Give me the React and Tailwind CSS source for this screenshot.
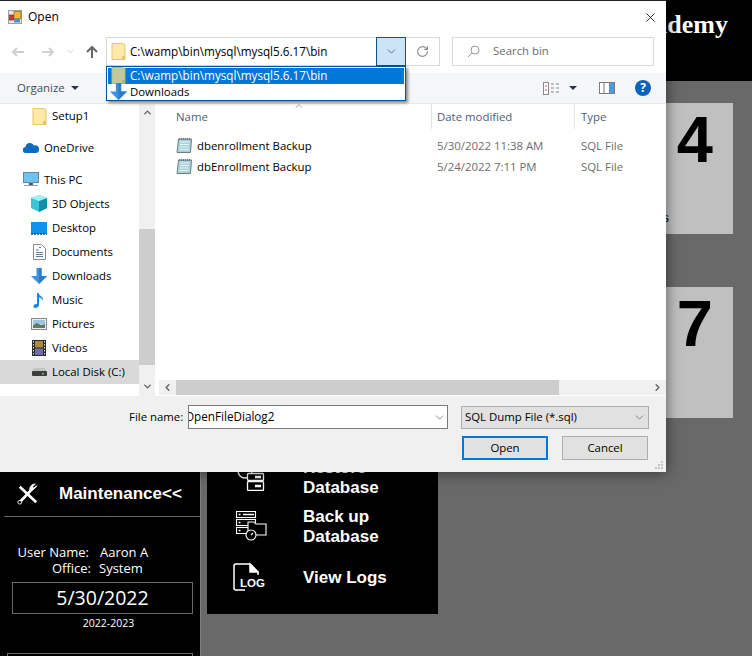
import { ChevronDown, ChevronUp, ChevronLeft, ChevronRight, RotateCw, X } from 'lucide-react';

const UI = "font-['Open_Sans','Noto_Sans',sans-serif]";

function Folder({ dim }) {
  return (
    <svg width="15" height="17" viewBox="0 0 15 17" className="shrink-0">
      <path d="M1 .5h10l3 1v15H1z" fill={dim ? '#c3c99b' : '#ffe9a6'} stroke={dim ? '#b6bd80' : '#e8c566'} />
      <path d="M11 16.5v-3l3-1v4z" fill={dim ? '#a9b36a' : '#e8c566'} />
    </svg>
  );
}

function DownArrow({ size = 16 }) {
  return (
    <svg width={size} height={size} viewBox="0 0 16 16" className="shrink-0">
      <path d="M5.5 0h5v8H16l-8 8-8-8h5.5z" fill="#3f92df" />
      <path d="M8 0h2.5v8H16l-8 8z" fill="#2b7ccb" />
    </svg>
  );
}

function SqlFile() {
  return (
    <svg width="16" height="15" viewBox="0 0 16 15" className="shrink-0">
      <path d="M2.5 1h13l-1 13.5H1z" fill="#a8d3de" stroke="#6f7f7f" />
      <path d="M4 4h9M4 6.5h9M3.5 9h9M3.5 11.5h9" stroke="#e7f2f4" />
      <path d="M3 1h12" stroke="#444" strokeDasharray="1 1" />
    </svg>
  );
}

function NavIcon({ name }) {
  if (name === 'cube')
    return (
      <svg width="16" height="17" viewBox="0 0 16 17">
        <path d="M8 0l8 3v10l-8 4-8-4V3z" fill="#39c6d4" />
        <path d="M8 6l8-3v10l-8 4z" fill="#0f8fa8" />
        <path d="M8 0l8 3-8 3-8-3z" fill="#9ff0f2" />
      </svg>
    );
  if (name === 'desktop')
    return (
      <svg width="16" height="14" viewBox="0 0 16 14">
        <rect width="16" height="12" y="1" fill="#0f92ee" />
        <path d="M0 13h16" stroke="#15507f" strokeWidth="1.5" strokeDasharray="2 1" />
      </svg>
    );
  if (name === 'docs')
    return (
      <svg width="13" height="16" viewBox="0 0 13 16">
        <path d="M.5.5h8l4 4v11H.5z" fill="#fff" stroke="#8a8a8a" />
        <path d="M3 6h3M3 8.500h7M3 10.500h7M3 12.500h7" stroke="#5b7f99" />
        <path d="M6 3.500h2" stroke="#3f8ac0" />
      </svg>
    );
  if (name === 'music')
    return (
      <svg width="12" height="16" viewBox="0 0 12 16">
        <path d="M4 1h1.500c.5 3 5.500 3.500 4.500 8-.5-2-2.500-3.500-4-3.500V13c0 2-2 3-4 3s-2-2-1-3 2.500-1.200 3-1z" fill="#1a86e0" />
      </svg>
    );
  if (name === 'pictures')
    return (
      <svg width="16" height="12" viewBox="0 0 16 12">
        <rect x=".5" y=".5" width="15" height="11" fill="#e8eef2" stroke="#8a8a8a" />
        <rect x="2" y="2" width="12" height="4" fill="#9cc6e6" />
        <path d="M2 7l4-2 4 2 4-1v4H2z" fill="#5d7a63" />
      </svg>
    );
  if (name === 'videos')
    return (
      <svg width="14" height="16" viewBox="0 0 14 16">
        <rect width="14" height="16" fill="#2b2b2b" />
        <rect x="3" y="1" width="8" height="6.500" fill="#b08a3a" />
        <rect x="3" y="8.500" width="8" height="6.500" fill="#6f6fb0" />
        <path d="M1.500 1v14M12.500 1v14" stroke="#ddd" strokeDasharray="1.500 1.500" />
      </svg>
    );
  if (name === 'disk')
    return (
      <svg width="15" height="8" viewBox="0 0 15 8">
        <path d="M2 0h11l2 3H0z" fill="#c4c4c4" />
        <rect y="3" width="15" height="5" rx="1" fill="#3e3e3e" />
        <rect x="10" y="5" width="2" height="1.500" fill="#4dd05a" />
      </svg>
    );
  if (name === 'cloud')
    return (
      <svg width="16" height="11" viewBox="0 0 16 11">
        <path d="M3 11a3 3 0 0 1-.5-6A4.500 4.500 0 0 1 11 3.500 3.800 3.800 0 0 1 16 8c0 2-1.500 3-3 3z" fill="#0f6cbd" />
      </svg>
    );
  if (name === 'pc')
    return (
      <svg width="16" height="15" viewBox="0 0 16 15">
        <rect x=".5" y=".5" width="15" height="10" fill="#6ec3f0" stroke="#6d8494" />
        <path d="M6 11h4v2H6zM1 13.500h14" stroke="#8ba0ad" />
      </svg>
    );
  return null;
}

const placesTop = [
  { label: 'OneDrive', icon: 'cloud' },
  { label: 'This PC', icon: 'pc' },
];

const places = [
  { label: '3D Objects', icon: 'cube' },
  { label: 'Desktop', icon: 'desktop' },
  { label: 'Documents', icon: 'docs' },
  { label: 'Downloads', icon: 'down' },
  { label: 'Music', icon: 'music' },
  { label: 'Pictures', icon: 'pictures' },
  { label: 'Videos', icon: 'videos' },
  { label: 'Local Disk (C:)', icon: 'disk', selected: true },
];

const files = [
  { name: 'dbenrollment Backup', date: '5/30/2022 11:38 AM' },
  { name: 'dbEnrollment Backup', date: '5/24/2022 7:11 PM' },
];

function OpenDialog() {
  return (
    <div className={`absolute left-0 top-0 flex h-[472px] w-[666px] flex-col border-t border-[#222] bg-white text-[11.4px] text-black shadow-[0_0_14px_rgba(0,0,0,0.55)] ${UI}`}>
      {/* title bar */}
      <div className="flex h-[36px] shrink-0 items-center pb-[4px] pl-[8px] pr-[8px]">
        <svg width="14" height="14" viewBox="0 0 14 14">
          <rect x=".5" y=".5" width="13" height="13" fill="#e6e6e6" stroke="#a0a0a0" />
          <rect x="6" y="1.500" width="7" height="7" fill="#f2b632" stroke="#8a6a1a" strokeWidth=".7" />
          <rect x="1.500" y="5" width="4" height="5" fill="#d8382c" stroke="#7a2a2a" strokeWidth=".7" />
          <rect x="6" y="9" width="6" height="3.500" fill="#4f8fe0" />
        </svg>
        <span className="ml-[6px] text-[12px]">Open</span>
        <X size={15} strokeWidth={1.3} className="ml-auto" />
      </div>

      {/* address row */}
      <div className="relative flex h-[29px] shrink-0 items-center">
        <svg width="14" height="12" viewBox="0 0 14 12" className="ml-[11px]">
          <path d="M13 6H2M6 2L2 6l4 4" fill="none" stroke="#d0d0d0" strokeWidth="2" />
        </svg>
        <svg width="14" height="12" viewBox="0 0 14 12" className="ml-[16px]">
          <path d="M1 6h11M8 2l4 4-4 4" fill="none" stroke="#d0d0d0" strokeWidth="2" />
        </svg>
        <ChevronDown size={9} strokeWidth={2.5} className="ml-[11px] text-[#ccc]" />
        <svg width="14" height="14" viewBox="0 0 14 14" className="ml-[10px]">
          <path d="M7 13V2M2 7l5-5 5 5" fill="none" stroke="#666" strokeWidth="2" />
        </svg>
        <div className="ml-[7px] flex h-[29px] w-[270px] items-center gap-[4px] border border-r-0 border-[#d9d9d9] pl-[4px] text-[11.7px]">
          <Folder />
          <span>C:\wamp\bin\mysql\mysql5.6.17\bin</span>
        </div>
        <div className="flex h-[29px] w-[30px] items-center justify-center border border-[#005499] bg-[#cce4f7]">
          <ChevronDown size={13} strokeWidth={1.2} className="text-[#333]" />
        </div>
        <div className="flex h-[29px] w-[34px] items-center justify-center border border-l-0 border-[#d9d9d9]">
          <RotateCw size={13} strokeWidth={2} className="text-[#8a8a8a]" />
        </div>
        <div className="ml-[12px] flex h-[29px] w-[202px] items-center border border-[#d9d9d9] pl-[14px] text-[#6d6d6d]">
          <svg width="13" height="13" viewBox="0 0 13 13">
            <circle cx="8" cy="5" r="4" fill="none" stroke="#999" />
            <path d="M5 8l-4 4" stroke="#999" />
          </svg>
          <span className="ml-[13px] pb-[1px]">Search bin</span>
        </div>

        {/* open address dropdown */}
        <div className="absolute left-[106px] top-[29px] z-10 h-[35px] w-[300px] border border-[#005499] bg-white shadow-[2px_2px_3px_rgba(0,0,0,0.45)]">
          <div className="m-[1px] flex h-[16px] items-center gap-[4px] bg-[#0078d7] pl-[3px] text-[11.7px] text-white">
            <span className="-mt-[1px] h-[17px]">
              <Folder dim />
            </span>
            <span>C:\wamp\bin\mysql\mysql5.6.17\bin</span>
          </div>
          <div className="mx-[1px] flex h-[15px] items-center pb-[1px] pl-[22px]">Downloads</div>
          <div className="absolute left-[3px] top-[16px]">
            <DownArrow size={17} />
          </div>
        </div>
      </div>

      {/* command bar */}
      <div className="mt-[7px] flex h-[31px] shrink-0 items-center border-b border-[#e8e8e8] bg-[#f5f6f7] pl-[17px] text-[#3b4a5e]">
        <span>Organize</span>
        <span className="ml-[6px] h-0 w-0 border-x-[4px] border-t-[4px] border-x-transparent border-t-[#26364f]" />
        <div className="ml-auto flex items-center">
          <svg width="16" height="13" viewBox="0 0 16 13">
            <rect x=".5" y=".5" width="5" height="12" fill="#fff" stroke="#8a8a8a" />
            <path d="M2 4h2M2 8h2" stroke="#c55" />
            <path d="M8 2h3M13 2h3M8 6h3M13 6h3M8 10h3M13 10h3" stroke="#7a8594" />
          </svg>
          <span className="ml-[10px] h-0 w-0 border-x-[4px] border-t-[4px] border-x-transparent border-t-[#26364f]" />
          <svg width="16" height="12" viewBox="0 0 16 12" className="ml-[22px]">
            <rect x=".5" y=".5" width="15" height="11" fill="#fff" stroke="#7a7a7a" />
            <rect x="10" y="1" width="5" height="10" fill="#4b9ce0" />
            <path d="M5 1v10" stroke="#7a7a7a" />
          </svg>
          <span className="ml-[20px] mr-[15px] flex h-[16px] w-[16px] items-center justify-center rounded-full bg-[#0c64b9] text-[12px] font-bold leading-none text-white">?</span>
        </div>
      </div>

      {/* nav pane + file list */}
      <div className="flex h-[292px] shrink-0">
        <div className="flex w-[139px] shrink-0 flex-col">
          <div className="flex h-[24px] items-center pl-[32px]">
            <Folder />
            <span className="ml-[5px]">Setup1</span>
          </div>
          <div className="mt-[8px] flex flex-col">
            {placesTop.map((p, i) => (
              <div key={p.label} className={`flex h-[24px] items-center pb-[1px] pl-[23px] ${i === 0 ? 'mb-[8px]' : ''}`}>
                <span className="flex w-[16px] justify-center">
                  <NavIcon name={p.icon} />
                </span>
                <span className="ml-[5px]">{p.label}</span>
              </div>
            ))}
          </div>
          {places.map((p) => (
            <div key={p.label} className={`flex h-[24px] shrink-0 items-center pb-[1px] pl-[31px] ${p.selected ? 'bg-[#d9d9d9]' : ''}`}>
              <span className="flex w-[16px] justify-center">
                {p.icon === 'down' ? <DownArrow /> : <NavIcon name={p.icon} />}
              </span>
              <span className="ml-[5px]">{p.label}</span>
            </div>
          ))}
        </div>

        {/* nav scrollbar */}
        <div className="flex w-[16px] shrink-0 flex-col bg-[#f0f0f0]">
          <div className="flex h-[17px] items-center justify-center">
            <ChevronUp size={11} strokeWidth={3} className="text-[#606060]" />
          </div>
          <div className="mt-[108px] h-[136px] bg-[#cdcdcd]" />
          <div className="mt-auto flex h-[20px] items-center justify-center">
            <ChevronDown size={11} strokeWidth={3} className="text-[#606060]" />
          </div>
        </div>

        <div className="flex min-w-0 flex-1 flex-col pl-[4px]">
          <div className="relative flex h-[25px] shrink-0 text-[#4c607a]">
            <div className="w-[273px] border-r border-[#e5e5e5] pl-[17px] pt-[4px]">Name</div>
            <div className="w-[143px] border-r border-[#e5e5e5] pl-[5px] pt-[4px]">Date modified</div>
            <div className="pl-[6px] pt-[4px]">Type</div>
            <ChevronUp size={12} strokeWidth={1.3} className="absolute left-[134px] -top-[4px] text-[#7a7a7a]" />
          </div>
          <div className="flex-1 pt-[6px]">
            {files.map((f) => (
              <div key={f.name} className="flex h-[21px] items-center">
                <span className="ml-[17px] flex w-[21px]">
                  <SqlFile />
                </span>
                <span className="w-[240px]">{f.name}</span>
                <span className="w-[144px] text-[#6d6d6d]">{f.date}</span>
                <span className="text-[#6d6d6d]">SQL File</span>
              </div>
            ))}
          </div>
          {/* horizontal scrollbar */}
          <div className="mb-[1px] flex h-[15px] shrink-0 items-center bg-[#f0f0f0]">
            <span className="flex w-[17px] justify-center">
              <ChevronLeft size={11} strokeWidth={3} className="text-[#606060]" />
            </span>
            <div className="h-full w-[383px] bg-[#cdcdcd]" />
            <span className="ml-auto flex w-[17px] justify-center">
              <ChevronRight size={11} strokeWidth={3} className="text-[#606060]" />
            </span>
          </div>
        </div>
      </div>

      {/* file name + buttons */}
      <div className="relative flex-1 bg-[#f0f0f0] pt-[9px]">
        <div className="flex items-center">
          <span className="ml-[129px] w-[59px]">File name:</span>
          <div className="flex h-[24px] w-[260px] items-center overflow-hidden border border-[#7a7a7a] bg-white">
            <span className="-ml-[4px] flex-1 text-[11.7px]">OpenFileDialog2</span>
            <ChevronDown size={13} strokeWidth={1.2} className="mr-[1px] text-[#555]" />
          </div>
          <div className="ml-[13px] flex h-[23px] w-[188px] items-center justify-between border border-[#adadad] bg-[#e1e1e1] pl-[3px] pr-[2px]">
            <span>SQL Dump File (*.sql)</span>
            <ChevronDown size={13} strokeWidth={1.2} className="text-[#555]" />
          </div>
        </div>
        <div className="ml-[462px] mt-[7px] flex gap-[14px]">
          <div className="flex h-[24px] w-[86px] items-center justify-center border-2 border-[#0078d7] bg-[#e1e1e1] pb-[1px]">Open</div>
          <div className="flex h-[24px] w-[86px] items-center justify-center border border-[#adadad] bg-[#e1e1e1] pb-[1px]">Cancel</div>
        </div>
        <svg width="9" height="9" viewBox="0 0 9 9" className="absolute bottom-[2px] right-[2px]">
          <path d="M6 0h2v2H6zM3 3h2v2H3zM6 3h2v2H6zM0 6h2v2H0zM3 6h2v2H3zM6 6h2v2H6z" fill="#c4c4c4" />
        </svg>
      </div>
    </div>
  );
}

function RestoreIcon() {
  return (
    <svg width="32" height="26" viewBox="0 0 32 26" fill="none" stroke="#fff" strokeWidth="1.300" className="block">
      <circle cx="12" cy="6" r="7" />
      <rect x="14.500" y="8.500" width="16" height="7" rx="1" fill="#000" />
      <rect x="14.500" y="16.500" width="16" height="9" rx="1" fill="#000" />
      <path d="M22 12h6M22 21h6" strokeWidth="2.500" />
    </svg>
  );
}

function BackupIcon() {
  return (
    <svg width="31" height="30" viewBox="0 0 31 30" fill="none" stroke="#fff" strokeWidth="1.100" className="block">
      <rect x=".5" y=".5" width="19" height="6" />
      <rect x=".5" y="8.500" width="19" height="6" />
      <rect x=".5" y="16.500" width="19" height="6" />
      <path d="M2.500 3.500h2M7 3.500h11M2.500 11.500h2M2.500 19.500h2" strokeWidth="1.500" />
      <path d="M12 24V11h6l2 2h10v11z" fill="#000" />
      <circle cx="15" cy="24" r="5" fill="#000" />
      <path d="M15 24l2-2" />
    </svg>
  );
}

function LogIcon() {
  return (
    <svg width="26" height="28" viewBox="0 0 26 28" fill="none" stroke="#fff" strokeWidth="1.500" className="block">
      <path d="M12 27H3a2 2 0 0 1-2-2V3a2 2 0 0 1 2-2h14l8 8v3" />
      <path d="M17 1v8h8z" fill="#fff" />
    </svg>
  );
}

function Sidebar() {
  return (
    <div className="flex w-[201px] shrink-0 flex-col border-r border-[#808080] bg-black pl-[4px] pt-[391px] font-['Liberation_Sans',sans-serif] text-white">
      <div className="flex h-[45px] shrink-0 items-center border-b border-[#696969]">
        <svg width="22" height="22" viewBox="0 0 24 24" className="ml-[13px]" fill="#fff" stroke="#fff">
          <path d="M3 21L18 5M3 4l18 17" strokeWidth="3" />
          <path d="M22 3l-4 4-2-2 4-4a6 6 0 0 0-6 7z" />
          <circle cx="3" cy="21" r="2" fill="#000" />
        </svg>
        <span className="ml-[20px] text-[17px] font-bold">Maintenance&lt;&lt;</span>
      </div>
      <div className={`mt-[28px] grid shrink-0 grid-cols-[87px_auto] gap-y-[1px] text-[13px] leading-[15px] ${UI}`}>
        <span className="pr-[2px] text-right">User Name:</span>
        <span className="pl-[9px]">Aaron A</span>
        <span className="text-right">Office:</span>
        <span className="pl-[8px]">System</span>
      </div>
      <div className={`ml-[8px] mt-[6px] flex h-[32px] w-[181px] shrink-0 items-center justify-center border border-[#696969] text-[19.5px] ${UI}`}>
        5/30/2022
      </div>
      <div className={`ml-[8px] mt-[2px] w-[181px] shrink-0 pl-[12px] text-center text-[10.5px] ${UI}`}>2022-2023</div>
      <div className="ml-[3px] mt-[21px] h-[20px] w-[186px] shrink-0 border border-[#696969]" />
    </div>
  );
}

function MaintenanceMenu() {
  return (
    <div className="ml-[6px] flex h-[533px] w-[231px] shrink-0 flex-col justify-end bg-black pb-[21px] pl-[26px] font-['Liberation_Sans',sans-serif] text-[17px] font-bold leading-[20px] text-white">
      <div className="flex h-[50px] items-center">
        <span className="w-[70px]"><RestoreIcon /></span>
        <span>Restore<br />Database</span>
      </div>
      <div className="-mt-[1px] flex h-[50px] items-center">
        <span className="w-[70px] pb-[2px] pl-[3px]"><BackupIcon /></span>
        <span>Back up<br />Database</span>
      </div>
      <div className="mt-[11px] flex h-[30px] items-center">
        <span className="relative w-[70px] pb-[2px]">
          <LogIcon />
          <span className="absolute left-[7px] top-[13px] text-[11.5px] leading-[14px]">LOG</span>
        </span>
        <span>View Logs</span>
      </div>
    </div>
  );
}

export default function App() {
  return (
    <div className="relative h-[656px] w-[752px] overflow-hidden bg-[#696969]">
      <div className="flex h-[81px] justify-end bg-black pr-[24px] pt-[5px] font-['Liberation_Serif',serif] text-[26px] font-bold text-white">
        Ligao Academy
      </div>
      <div className="flex h-[575px]">
        <Sidebar />
        <MaintenanceMenu />
        <div className="ml-auto mr-[19px] flex w-[193px] flex-col gap-[53px] pt-[22px]">
          {['4', '7'].map((n, i) => (
            <div key={n} className="relative h-[131px] bg-[#c0c0c0] pr-[20px] text-right font-['Liberation_Sans',sans-serif] text-[65px] font-bold leading-[73px] text-black">
              {n}
              {i === 0 && <span className="absolute bottom-[9px] right-[64px] text-[13px] font-normal leading-[15px]">Students</span>}
            </div>
          ))}
        </div>
      </div>
      <OpenDialog />
    </div>
  );
}
